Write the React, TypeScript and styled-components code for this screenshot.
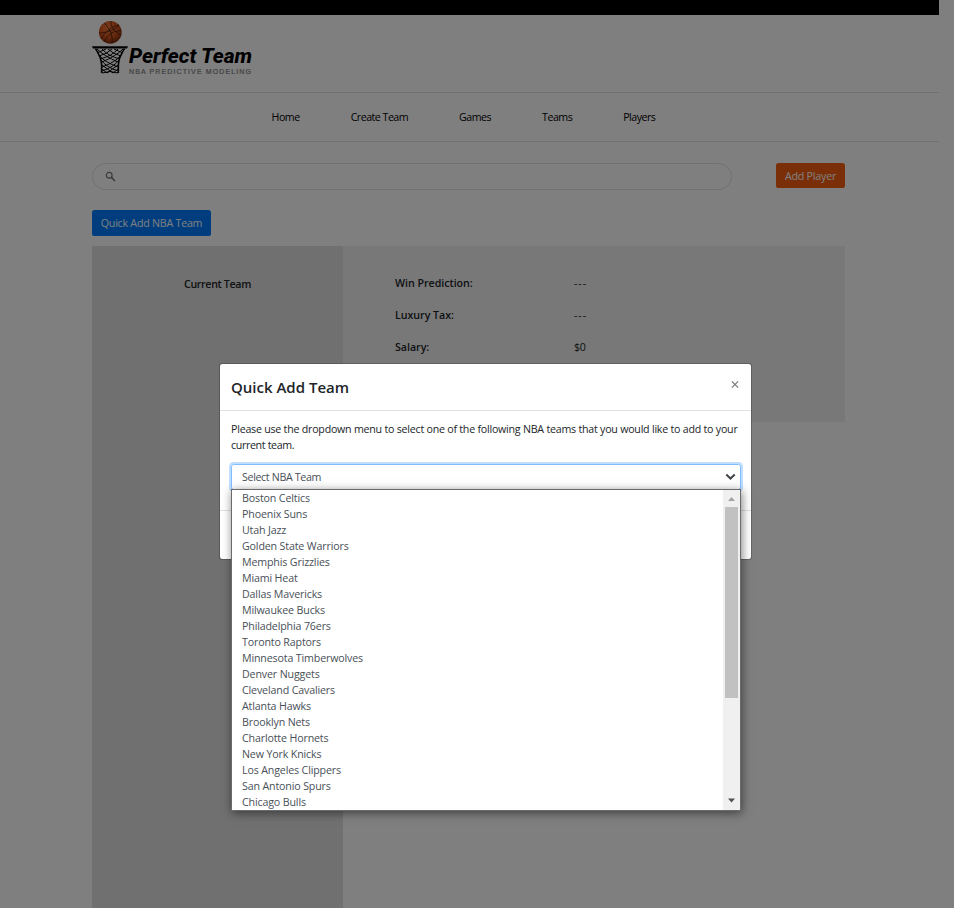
import React from "react";
import styled, { createGlobalStyle } from "styled-components";

const GlobalStyle = createGlobalStyle`
  * { box-sizing: border-box; }
  html, body { margin: 0; height: 100%; overflow: hidden; background: #fff; }
  body {
    font-family: "Segoe UI", "Open Sans", "Noto Sans", sans-serif;
    font-size: 10.67px;
    line-height: 16px;
    color: #212529;
  }
  button { font-family: inherit; }
`;

const Page = styled.div`
  position: relative;
  height: 908px;
  overflow: hidden;
  padding-right: 15px;
  background: #fff;
`;

const Text = styled.span<{ $spacing?: number }>`
  white-space: nowrap;
  letter-spacing: ${(p) => p.$spacing ?? -0.35}px;
`;

const TopBar = styled.div`
  height: 15px;
  background: #000;
`;

const Header = styled.header`
  height: 78px;
  padding: 5px 0 0 92px;
  border-bottom: 1px solid #e2e2e2;
`;

const Nav = styled.nav`
  display: flex;
  justify-content: center;
  gap: 51px;
  height: 49px;
  padding: 16px 12px 0 0;
  border-bottom: 1px solid #e2e2e2;
`;

const NavLink = styled.a`
  color: #000;
`;

const Container = styled.main`
  display: flex;
  flex-direction: column;
  align-items: flex-start;
  width: 753px;
  margin-left: 92px;
  padding-top: 21px;
`;

const SearchRow = styled.div`
  display: flex;
  justify-content: space-between;
  align-items: flex-start;
  width: 100%;
  margin-bottom: 20px;
`;

const SearchBox = styled.div`
  display: flex;
  align-items: center;
  width: 640px;
  height: 27px;
  padding-left: 12px;
  border: 1px solid #dfe1e5;
  border-radius: 14px;
`;

const Button = styled.button<{ $color: string; $width: number; $height: number }>`
  width: ${(p) => p.$width}px;
  height: ${(p) => p.$height}px;
  padding: 0;
  border: 0;
  border-radius: 2.6px;
  background: ${(p) => p.$color};
  color: #fff;
  font-size: 10.67px;
  line-height: 16px;
`;

const Panels = styled.section`
  display: flex;
  align-items: flex-start;
  width: 100%;
  margin-top: 10px;
`;

const TeamPanel = styled.div`
  width: 251px;
  height: 662px;
  padding-top: 30px;
  background: #e0e0e0;
  text-align: center;
  font-weight: 600;
`;

const StatsPanel = styled.dl`
  display: grid;
  grid-template-columns: 179px 1fr;
  grid-auto-rows: 32px;
  flex: 1;
  height: 176px;
  margin: 0;
  padding: 29px 52px 0;
  background: #f0f0f0;
`;

const StatName = styled.dt`
  font-weight: 600;
`;

const StatValue = styled.dd`
  margin: 0;
`;

const Backdrop = styled.div`
  position: absolute;
  inset: 0;
  background: rgba(0, 0, 0, 0.5);
`;

const Modal = styled.div`
  position: absolute;
  left: 219px;
  top: 363px;
  width: 533px;
  height: 197px;
  border: 1px solid rgba(0, 0, 0, 0.2);
  border-radius: 3.2px;
  background: #fff;
  background-clip: padding-box;
`;

const ModalHeader = styled.div`
  display: flex;
  justify-content: space-between;
  height: 47px;
  padding: 15px 11px 0;
  border-bottom: 1px solid #dee2e6;
`;

const ModalTitle = styled.h5`
  margin: 0;
  font-size: 15px;
  line-height: 17px;
  font-weight: 600;
`;

const CloseIcon = styled.svg`
  margin: 1px 1px 0 0;
`;

const ModalBody = styled.div`
  height: 100px;
  padding: 10px 10px 0 11px;
  border-bottom: 1px solid #dee2e6;
`;

const Message = styled.p`
  display: flex;
  flex-direction: column;
  margin: 0 0 11px;
`;

const Select = styled.div`
  position: relative;
  display: flex;
  align-items: center;
  justify-content: space-between;
  height: 26px;
  padding: 0 4px 0 10px;
  border: 1px solid #80bdff;
  border-radius: 2.6px;
  box-shadow: 0 0 0 2px rgba(0, 123, 255, 0.25);
  color: #495057;
`;

const Dropdown = styled.div`
  position: absolute;
  left: -1px;
  top: 24px;
  width: 510px;
  height: 322px;
  display: flex;
  justify-content: space-between;
  border: 1px solid #6b6b6b;
  background: #fff;
  box-shadow: 1px 2px 9px rgba(0, 0, 0, 0.5);
`;

const OptionList = styled.ul`
  margin: 0;
  padding: 0 0 0 10px;
  list-style: none;
`;

const Option = styled.li`
  height: 16px;
`;

const ScrollTrack = styled.div`
  display: flex;
  flex-direction: column;
  align-items: center;
  width: 17px;
  background: #f0f0f0;
`;

const ScrollThumb = styled.div`
  width: 13px;
  height: 191px;
  margin-bottom: 94px;
  background: #c1c1c1;
`;

function Logo() {
  return (
    <svg width="162" height="58" viewBox="0 0 162 58">
      <defs>
        <radialGradient id="ball" cx="40%" cy="30%" r="75%">
          <stop offset="0" stopColor="#f4793a" />
          <stop offset="0.6" stopColor="#c9501c" />
          <stop offset="1" stopColor="#6d260a" />
        </radialGradient>
      </defs>
      <circle cx="18.3" cy="12.3" r="11.4" fill="url(#ball)" />
      <path
        d="M7 13 C14 13 23 10 27 5 M12 3 C18 8 21 16 20 23 M9 19 C14 10 21 6 27 5 M12 22 C15 14 23 10 29 11 M19 1 C18 6 22 12 29 15"
        fill="none"
        stroke="#38170b"
        strokeWidth="0.7"
      />
      <path d="M0 26.3 H36 L35 28.6 H1Z" fill="#000" />
      <path
        d="M3.5 28.6 C7 34 9.5 39 9.6 45 V53 M32.5 28.6 C29 34 26.5 39 26.4 45 V53"
        fill="none"
        stroke="#000"
        strokeWidth="1.5"
      />
      <path
        d="M5 29 Q12 36 26 42 M10 29 Q16 36 28 39 M16 29 Q21 34 29 36 M22 29 L31 33 M31 29 Q24 36 10 42 M26 29 Q20 36 8 39 M20 29 Q15 34 7 36 M14 29 L5 33 M7 35 Q12 42 26 47 M29 35 Q24 42 10 47 M9 40 Q14 47 26 51 M27 40 Q22 47 10 51 M10 45 L21 53 M26 45 L15 53 M10 49 L15 53 M26 49 L21 53 M10 53 Q18 50 26 53"
        fill="none"
        stroke="#000"
        strokeWidth="1"
      />
      <text
        x="37"
        y="42.5"
        textLength="123"
        lengthAdjust="spacingAndGlyphs"
        fontFamily="Roboto, sans-serif"
        fontSize="21"
        fontWeight="800"
        fontStyle="italic"
        fill="#000"
      >
        Perfect Team
      </text>
      <text
        x="37"
        y="53.5"
        textLength="122"
        fontFamily="Liberation Sans, sans-serif"
        fontSize="7"
        fill="#808080"
        stroke="#808080"
        strokeWidth="0.2"
      >
        NBA PREDICTIVE MODELING
      </text>
    </svg>
  );
}

const links = ["Home", "Create Team", "Games", "Teams", "Players"];

const stats = [
  ["Win Prediction:", "---"],
  ["Luxury Tax:", "---"],
  ["Salary:", "$0"],
];

const teams = [
  "Boston Celtics", "Phoenix Suns", "Utah Jazz", "Golden State Warriors",
  "Memphis Grizzlies", "Miami Heat", "Dallas Mavericks", "Milwaukee Bucks",
  "Philadelphia 76ers", "Toronto Raptors", "Minnesota Timberwolves",
  "Denver Nuggets", "Cleveland Cavaliers", "Atlanta Hawks", "Brooklyn Nets",
  "Charlotte Hornets", "New York Knicks", "Los Angeles Clippers",
  "San Antonio Spurs", "Chicago Bulls",
];

export default function App() {
  return (
    <Page>
      <GlobalStyle />
      <TopBar />
      <Header>
        <Logo />
      </Header>
      <Nav>
        {links.map((l) => (
          <NavLink key={l}>
            <Text $spacing={-0.52}>{l}</Text>
          </NavLink>
        ))}
      </Nav>
      <Container>
        <SearchRow>
          <SearchBox>
            <svg width="11" height="11" viewBox="0 0 11 11" fill="none" stroke="#757575">
              <circle cx="4.2" cy="4.2" r="2.9" strokeWidth="1.2" />
              <path d="M6.4 6.4 L10 10" strokeWidth="1.5" />
            </svg>
          </SearchBox>
          <Button $color="#f45e10" $width={69} $height={25}>
            <Text $spacing={-0.2}>Add Player</Text>
          </Button>
        </SearchRow>
        <Button $color="#007bff" $width={119} $height={26}>
          <Text $spacing={-0.23}>Quick Add NBA Team</Text>
        </Button>
        <Panels>
          <TeamPanel>
            <Text>Current Team</Text>
          </TeamPanel>
          <StatsPanel>
            {stats.map(([name, value]) => (
              <React.Fragment key={name}>
                <StatName>
                  <Text $spacing={-0.03}>{name}</Text>
                </StatName>
                <StatValue>
                  <Text $spacing={value === "---" ? 0.9 : -0.3}>{value}</Text>
                </StatValue>
              </React.Fragment>
            ))}
          </StatsPanel>
        </Panels>
      </Container>
      <Backdrop />
      <Modal>
        <ModalHeader>
          <ModalTitle>
            <Text $spacing={0}>Quick Add Team</Text>
          </ModalTitle>
          <CloseIcon width="8" height="9" viewBox="0 0 9 9" stroke="#7f7f7f" strokeWidth="1.5">
            <path d="M1 1 L8 8 M8 1 L1 8" />
          </CloseIcon>
        </ModalHeader>
        <ModalBody>
          <Message>
            <Text $spacing={-0.235}>
              Please use the dropdown menu to select one of the following NBA teams that you would like to add to your
            </Text>
            <Text>current team.</Text>
          </Message>
          <Select>
            <Text>Select NBA Team</Text>
            <svg width="11" height="8" viewBox="0 0 11 8" fill="none" stroke="#41464b" strokeWidth="2">
              <path d="M1.3 1.5 L5.5 5.5 L9.7 1.5" />
            </svg>
            <Dropdown>
              <OptionList>
                {teams.map((t) => (
                  <Option key={t}>
                    <Text $spacing={-0.15}>{t}</Text>
                  </Option>
                ))}
              </OptionList>
              <ScrollTrack>
                <svg width="17" height="17" viewBox="0 0 17 17">
                  <path d="M5 11 L8.5 7 L12 11Z" fill="#a3a3a3" />
                </svg>
                <ScrollThumb />
                <svg width="17" height="17" viewBox="0 0 17 17">
                  <path d="M5 6.5 L8.5 10.5 L12 6.5Z" fill="#505050" />
                </svg>
              </ScrollTrack>
            </Dropdown>
          </Select>
        </ModalBody>
      </Modal>
    </Page>
  );
}
